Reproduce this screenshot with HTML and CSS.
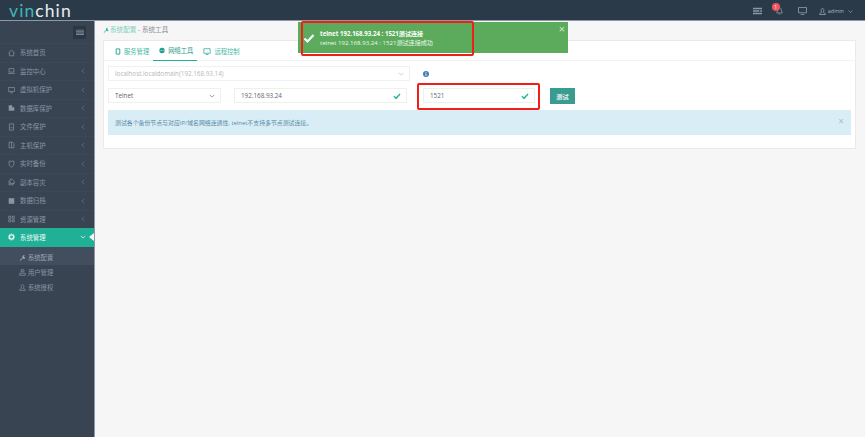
FILE: index.html
```html
<!DOCTYPE html>
<html lang="zh">
<head>
<meta charset="utf-8">
<title>系统工具</title>
<link rel="stylesheet" href="styles.css">
</head>
<body>
<svg class="defs" width="0" height="0" aria-hidden="true">
  <symbol id="chev-l" viewBox="0 0 8 8"><path d="M5.500 1 2.500 4l3 3" fill="none" stroke="currentColor" stroke-width="1"/></symbol>
  <symbol id="chev-d" viewBox="0 0 8 8"><path d="M1 2.500 4 5.500l3-3" fill="none" stroke="currentColor" stroke-width="1"/></symbol>
  <symbol id="check" viewBox="0 0 12 12"><path d="M1.500 6.500 4.500 9.500 10.500 3" fill="none" stroke="currentColor" stroke-width="2.200"/></symbol>
  <symbol id="wrench" viewBox="0 0 10 10"><path d="M1 9 5 5C4.500 3 6 1 8.500 1.500L7 3l.5 1.500L9 5C9 7 7 8 5.500 6L2 9.500Z" fill="currentColor"/></symbol>
</svg>
<header class="topbar">
  <div class="logo"><span class="logo-a">vin</span><span class="logo-b">chin</span></div>
  <div class="top-right">
    <svg class="top-icon" viewBox="0 0 10 8"><path d="M0 .5h10v1.500H0zM0 3.200h7v1.500H0zM8 3.200h2v1.500H8zM0 6h10v1.500H0z" fill="currentColor"/></svg>
    <span class="bell">
      <svg class="top-icon" viewBox="0 0 10 10"><path d="M5 1C3 1 2.500 3 2.500 5L1.500 7.500h7L7.500 5C7.500 3 7 1 5 1ZM4 8.800h2" fill="none" stroke="currentColor"/></svg>
      <span class="badge">1</span>
    </span>
    <svg class="top-icon screen" viewBox="0 0 10 9"><path d="M.5.500h9v6h-9zM3 8.500h4" fill="none" stroke="currentColor"/></svg>
    <span class="user">
      <svg class="user-icon" viewBox="0 0 10 10"><path d="M5 .8C3.500.8 3 2 3 3.500S4 5.500 4 6L1 8v1.300h8V8L6 6c0-.5 1-1 1-2.500S6.500.8 5 .8Z" fill="none" stroke="currentColor"/></svg>
      admin
      <svg class="caret" viewBox="0 0 8 8"><use href="#chev-d"/></svg>
    </span>
  </div>
</header>
<div class="main">
  <nav class="sidebar">
    <div class="toggle-row"><span class="toggle"><svg viewBox="0 0 10 8"><path d="M0 .5h10v1H0zM0 2.300h10v1H0zM0 4.100h10v1H0zM0 6h10v1H0z" fill="currentColor"/></svg></span></div>
    <ul class="menu">
      <li class="item"><svg class="mi" viewBox="0 0 10 10"><path d="M.5 5 5 1l4.500 4M2 4.500V9h6V4.500" fill="none" stroke="currentColor"/></svg><span>系统首页</span></li>
      <li class="item"><svg class="mi" viewBox="0 0 10 10"><path d="M1.500 1.500h7v5h-7zM0 8.500h10" fill="none" stroke="currentColor"/></svg><span>监控中心</span><svg class="arrow"><use href="#chev-l"/></svg></li>
      <li class="item"><svg class="mi" viewBox="0 0 10 10"><path d="M.5 1.500h9v5.500h-9zM3 9h4" fill="none" stroke="currentColor"/></svg><span>虚拟机保护</span><svg class="arrow"><use href="#chev-l"/></svg></li>
      <li class="item"><svg class="mi" viewBox="0 0 10 10"><path d="M1 1h5v8H1zM6 4h3v5H6z" fill="currentColor"/></svg><span>数据库保护</span><svg class="arrow"><use href="#chev-l"/></svg></li>
      <li class="item"><svg class="mi" viewBox="0 0 10 10"><path d="M2 .5h6v9H2zM3.500 6h3" fill="none" stroke="currentColor"/></svg><span>文件保护</span><svg class="arrow"><use href="#chev-l"/></svg></li>
      <li class="item"><svg class="mi" viewBox="0 0 10 10"><path d="M1.500 1h5l2 2v6h-7zM5 1v8" fill="none" stroke="currentColor"/></svg><span>主机保护</span><svg class="arrow"><use href="#chev-l"/></svg></li>
      <li class="item"><svg class="mi" viewBox="0 0 10 10"><path d="M1.500 1h7v4c0 2-2 3.500-3.500 4.500C3.500 8.500 1.500 7 1.500 5Z" fill="none" stroke="currentColor"/></svg><span>实时备份</span><svg class="arrow"><use href="#chev-l"/></svg></li>
      <li class="item"><svg class="mi" viewBox="0 0 10 10"><path d="M1.500 3V9h6V6M3 3V1h3l3 3v3H3Z" fill="none" stroke="currentColor"/></svg><span>副本容灾</span><svg class="arrow"><use href="#chev-l"/></svg></li>
      <li class="item"><svg class="mi" viewBox="0 0 10 10"><path d="M1 1h8v8H1z" fill="currentColor"/></svg><span>数据归档</span><svg class="arrow"><use href="#chev-l"/></svg></li>
      <li class="item"><svg class="mi" viewBox="0 0 10 10"><path d="M1 1h3v3H1zM6 1h3v3H6zM1 6h3v3H1zM6 6h3v3H6z" fill="none" stroke="currentColor"/></svg><span>资源管理</span><svg class="arrow"><use href="#chev-l"/></svg></li>
      <li class="item active"><svg class="mi" viewBox="0 0 10 10"><circle cx="5" cy="5" r="3" fill="none" stroke="currentColor" stroke-width="2"/><circle cx="5" cy="5" r="4.600" fill="none" stroke="currentColor" stroke-dasharray="1.500 1.400"/></svg><span>系统管理</span><svg class="arrow"><use href="#chev-d"/></svg></li>
    </ul>
    <ul class="submenu">
      <li class="sub current"><svg class="si"><use href="#wrench"/></svg><span>系统配置</span></li>
      <li class="sub"><svg class="si" viewBox="0 0 10 10"><path d="M3 1h4v3H3zM1 6h8v3H1z" fill="none" stroke="currentColor"/></svg><span>用户管理</span></li>
      <li class="sub"><svg class="si" viewBox="0 0 10 10"><path d="M5 1C3.500 1 3 2 3 3.500S4 5.500 4 6L1 8v1h8V8L6 6c0-.5 1-1 1-2.500S6.500 1 5 1Z" fill="none" stroke="currentColor"/></svg><span>系统授权</span></li>
    </ul>
  </nav>
  <main class="content">
    <div class="crumb"><svg class="crumb-icon"><use href="#wrench"/></svg><span class="crumb-link">系统配置</span><span class="crumb-rest"> - 系统工具</span></div>
    <section class="card">
      <div class="tabs">
        <span class="tab"><svg class="tab-icon" viewBox="0 0 10 10"><path d="M2 .7h6v8.600H2z" fill="none" stroke="currentColor" stroke-width="1.500"/></svg>服务管理</span>
        <span class="tab on"><svg class="tab-icon" viewBox="0 0 10 10"><circle cx="5" cy="5" r="4.500" fill="currentColor"/><path d="M.5 5h9" stroke="#fff" stroke-width=".6"/></svg>网络工具</span>
        <span class="tab"><svg class="tab-icon wide" viewBox="0 0 10 10"><path d="M.5 1h9v6.500h-9zM3 9.300h4" fill="none" stroke="currentColor"/></svg>远程控制</span>
      </div>
      <div class="form">
        <div class="row-host">
          <div class="field host"><span>localhost.localdomain(192.168.93.14)</span><svg class="caret-dim"><use href="#chev-d"/></svg></div>
          <svg class="info" viewBox="0 0 10 10"><circle cx="5" cy="5" r="5" fill="#3d7fbd"/><path d="M4.200 2h1.600v1.300H4.200zM4.200 4.200h1.600V8H4.200z" fill="#fff"/></svg>
        </div>
        <div class="row-test">
          <div class="field proto"><span>Telnet</span><svg class="caret-dark"><use href="#chev-d"/></svg></div>
          <div class="field ok addr"><span>192.168.93.24</span><svg class="tick"><use href="#check"/></svg></div>
          <div class="field ok port"><span>1521</span><svg class="tick"><use href="#check"/></svg></div>
          <button class="btn" type="button">测试</button>
        </div>
        <div class="alert"><span>测试各个备份节点与对应IP/域名网络连通性, telnet不支持多节点测试连接。</span><span class="alert-x">×</span></div>
      </div>
    </section>
  </main>
</div>
<div class="toast">
  <svg class="toast-check"><use href="#check"/></svg>
  <div class="toast-text">
    <div class="toast-title">telnet 192.168.93.24 : 1521测试连接</div>
    <div class="toast-body">telnet 192.168.93.24 : 1521测试连接成功</div>
  </div>
  <span class="toast-x">×</span>
</div>
<div class="mark mark-toast"></div>
<div class="mark mark-port"></div>
</body>
</html>
```
FILE: styles.css
```css
* { box-sizing: border-box; }
html, body { margin: 0; height: 100%; overflow: hidden; }
body { font-family: "Open Sans", "Noto Sans CJK SC", sans-serif; font-size: 6.300px; color: #667; background: #f6f6f6; display: flex; flex-direction: column; height: 437px; }
ul { list-style: none; margin: 0; padding: 0; }
.defs { position: absolute; }

.topbar { height: 21px; flex: none; background: #2b3a48; border-bottom: 1px solid #8d99a6; display: flex; align-items: center; justify-content: space-between; }
.logo { padding: 2px 0 0 9px; font-family: "Lato", sans-serif; font-size: 17.500px; letter-spacing: 1.100px; line-height: 18px; }
.logo-a { color: #3fb8ba; }
.logo-b { color: #e6eef2; }
.top-right { display: flex; align-items: center; color: #8b98a5; padding: 2px 12px 0 0; }
.top-icon { width: 9px; height: 8px; display: block; }
.bell { position: relative; margin-left: 13px; }
.badge { position: absolute; left: -3px; top: -4px; width: 8px; height: 8px; border-radius: 50%; background: #f2545f; color: #fff; font-size: 5px; line-height: 8px; text-align: center; }
.screen { margin-left: 14px; }
.user { display: flex; align-items: center; margin-left: 12px; font-size: 5.500px; color: #aab4be; gap: 2px; }
.user-icon { width: 7px; height: 7px; }
.caret { width: 5px; height: 5px; margin-left: 2px; }

.main { flex: 1; display: flex; min-height: 0; }
.sidebar { width: 95px; flex: none; background: #384452; border-right: 1px solid #8d99a6; color: #8896a4; }
.toggle-row { height: 22px; display: flex; justify-content: flex-end; align-items: center; padding: 0 8px 0 0; }
.toggle { width: 13px; height: 13px; background: #2b3744; display: flex; align-items: center; justify-content: center; color: #7a8794; }
.toggle svg { width: 8px; height: 7px; }
.item { height: 18.500px; display: flex; align-items: center; padding: 0 8px 0 8px; font-size: 6.400px; border-top: 1px solid #3c4856; position: relative; }
.item span { margin-left: 5px; flex: 1; }
.mi { width: 7px; height: 8px; flex: none; }
.arrow { width: 6px; height: 6px; flex: none; color: #66727f; }
.item.active { background: #1fb095; color: #eef8f6; border-top: 0; }
.item.active .arrow { color: #eef8f6; margin-right: 0; }
.item.active::after { content: ""; position: absolute; right: 0; top: 5px; border: 4.500px solid transparent; border-right: 5px solid #f6f6f6; border-left-width: 0; }
.sub { height: 15px; display: flex; align-items: center; padding-left: 19px; font-size: 6.300px; }
.sub span { margin-left: 2px; }
.si { width: 7px; height: 7px; flex: none; }
.sub.current { height: 18px; padding-top: 3px; background: #424e5e; color: #98a5b2; }

.content { flex: 1; padding: 4px 9px 0 8px; min-width: 0; }
.crumb { height: 15px; display: flex; align-items: flex-start; padding-top: 0; font-size: 6.600px; line-height: 9px; color: #8a8f94; }
.crumb-icon { width: 6px; height: 6px; color: #1fb095; margin: 2px 1px 0 0; }
.crumb-link { color: #7fd0bd; }
.crumb-rest { white-space: pre; }
.card { background: #fff; border: 1px solid #eaeaea; height: 109px; }
.tabs { height: 20px; display: flex; align-items: stretch; padding-left: 5px; border-bottom: 1px solid #f2f2f2; }
.tab { display: flex; align-items: center; gap: 3px; padding: 0 4px 0 6px; font-size: 6.300px; color: #4cb8a4; height: 20px; white-space: nowrap; }
.tab-icon { width: 6px; height: 7px; flex: none; color: #1fa08e; }
.tab-icon.wide { width: 8px; }
.tab.on { color: #2a9b8a; border-bottom: 1.500px solid #1fb095; }
.form { padding: 5px 4px 0 4px; }
.field { height: 15px; border: 1px solid #f0f0f0; background: #fff; display: flex; align-items: center; justify-content: space-between; padding: 0 5px 0 6px; font-size: 6.300px; color: #5e6670; }
.row-host { display: flex; align-items: flex-end; height: 15px; position: relative; }
.host { width: 302px; color: #b4b8bc; }
.caret-dim, .caret-dark { width: 6px; height: 6px; flex: none; }
.caret-dim { color: #c2c6ca; }
.caret-dark { color: #7c8288; }
.info { position: absolute; left: 315px; top: 5px; width: 6px; height: 6px; }
.row-test { display: flex; margin-top: 7px; height: 16px; align-items: flex-start; }
.proto { width: 113px; }
.ok { border-color: #edf2e6; }
.addr { width: 173px; margin-left: 13px; }
.port { width: 112px; margin-left: 16px; }
.tick { width: 8px; height: 8px; flex: none; color: #2fb39a; }
.btn { width: 25px; height: 16px; margin-left: 15px; padding: 0; border: 0; background: #3a9b90; color: #e8f5f3; font: 600 6.200px "Noto Sans CJK SC", sans-serif; }
.alert { margin-top: 6px; height: 25px; background: #d8edf5; color: #5b8aa5; display: flex; align-items: center; justify-content: space-between; padding: 0 7px; font-size: 5.900px; }
.alert-x { color: #a9bfca; font-size: 10px; margin-top: -4px; }

.toast { position: absolute; left: 298px; top: 22px; width: 270px; height: 31px; background: #5cab5c; color: #fff; display: flex; align-items: center; padding-left: 5px; }
.toast-check { width: 12px; height: 12px; margin-right: 5px; flex: none; }
.toast-text { font-size: 6.100px; line-height: 9px; flex: 1; }
.toast-title { font-weight: 700; }
.toast-body { color: #eef7ee; }
.toast-x { position: absolute; right: 3px; top: 1px; font-size: 11px; line-height: 11px; color: #cfe6cf; }
.mark { position: absolute; border: 2px solid #f01f17; border-radius: 2px; }
.mark-toast { left: 301px; top: 21px; width: 173px; height: 35px; }
.mark-port { left: 417px; top: 83px; width: 123px; height: 27px; }
```
